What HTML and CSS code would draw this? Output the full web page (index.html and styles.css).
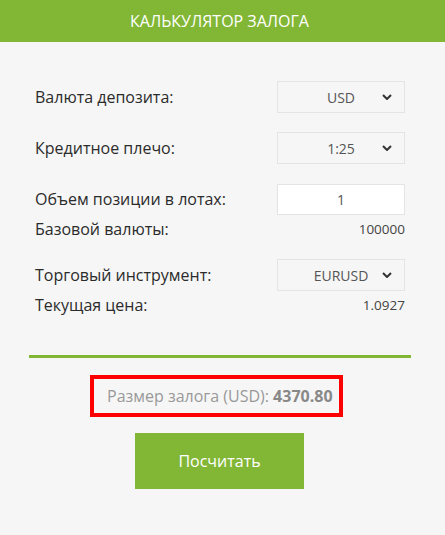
FILE: index.html
```html
<!DOCTYPE html>
<html lang="ru">
<head>
<meta charset="utf-8">
<title>Калькулятор залога</title>
<link rel="stylesheet" href="styles.css">
</head>
<body>
<header class="title">КАЛЬКУЛЯТОР ЗАЛОГА</header>
<main class="calc">
  <div class="row first">
    <span class="label">Валюта депозита:</span>
    <div class="select"><span>USD</span><svg class="chev" viewBox="0 0 10 6" width="10" height="6"><path d="M1 1l4 4 4-4" fill="none" stroke="#333" stroke-width="2"/></svg></div>
  </div>
  <div class="row">
    <span class="label">Кредитное плечо:</span>
    <div class="select"><span>1:25</span><svg class="chev" viewBox="0 0 10 6" width="10" height="6"><path d="M1 1l4 4 4-4" fill="none" stroke="#333" stroke-width="2"/></svg></div>
  </div>
  <div class="row">
    <span class="label">Объем позиции в лотах:</span>
    <div class="input">1</div>
  </div>
  <div class="info">
    <span class="label">Базовой валюты:</span>
    <span class="value">100000</span>
  </div>
  <div class="row group">
    <span class="label">Торговый инструмент:</span>
    <div class="select"><span>EURUSD</span><svg class="chev" viewBox="0 0 10 6" width="10" height="6"><path d="M1 1l4 4 4-4" fill="none" stroke="#333" stroke-width="2"/></svg></div>
  </div>
  <div class="info">
    <span class="label">Текущая цена:</span>
    <span class="value">1.0927</span>
  </div>
</main>
<hr class="divider">
<div class="result">Размер залога (USD): <b>4370.80</b></div>
<button class="calc-btn">Посчитать</button>
</body>
</html>
```
FILE: styles.css
```css
html, body {
  margin: 0;
  padding: 0;
  background: #f6f6f6;
  font-family: "Open Sans", "Liberation Sans", sans-serif;
  color: #333;
}
body {
  height: 535px;
  overflow: hidden;
}
.title {
  height: 42px;
  line-height: 42px;
  padding-right: 6px;
  background: #82b735;
  color: #fff;
  text-align: center;
  font-size: 16px;
}
.calc {
  padding: 39px 40px 0 35px;
}
.row {
  display: flex;
  justify-content: space-between;
  align-items: center;
  height: 32px;
  margin-top: 19px;
}
.row.first { margin-top: 0; }
.row.group { margin-top: 20px; }
.label {
  font-size: 16px;
  color: #2b2b2b;
}
.select, .input {
  position: relative;
  box-sizing: border-box;
  width: 128px;
  height: 32px;
  border: 1px solid #e4e4e4;
  display: flex;
  align-items: center;
  justify-content: center;
  font-size: 14px;
  color: #555;
}
.input {
  height: 31px;
  background: #fff;
}
.chev {
  position: absolute;
  right: 12px;
  top: 12px;
}
.info {
  display: flex;
  justify-content: space-between;
  align-items: center;
  height: 20px;
  margin-top: 4px;
}
.value {
  font-size: 13.5px;
  color: #444;
}
.divider {
  margin: 40px 34px 0 29px;
  border: 0;
  height: 3px;
  background: #82b735;
}
.result {
  display: inline-block;
  box-sizing: border-box;
  margin: 17px 0 0 90px;
  width: 253px;
  height: 42px;
  line-height: 34px;
  padding-left: 13px;
  border: 4px solid #ff0000;
  font-size: 16px;
  color: #999;
}
.result b {
  color: #888;
  font-weight: 700;
}
.calc-btn {
  display: block;
  margin: 16px 0 0 135px;
  width: 169px;
  height: 56px;
  border: 0;
  background: #82b735;
  color: #fff;
  font-family: "Open Sans", "Liberation Sans", sans-serif;
  font-size: 16px;
  padding: 0;
}
```
